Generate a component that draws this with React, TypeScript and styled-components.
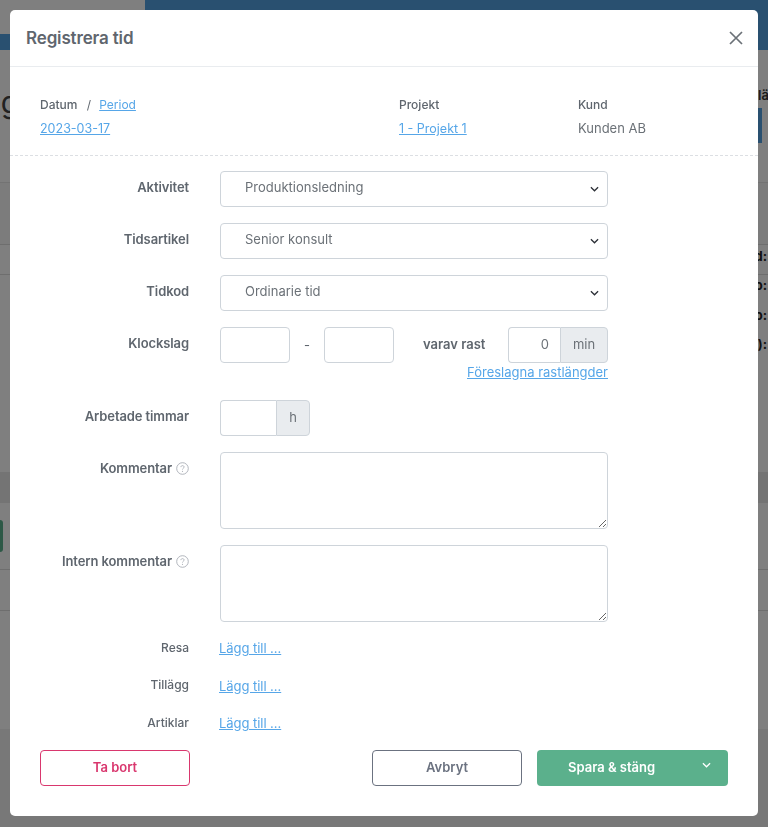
import React from "react";
import styled, { createGlobalStyle } from "styled-components";

const GlobalStyle = createGlobalStyle`
  html, body {
    margin: 0;
    padding: 0;
    height: 100%;
    overflow: hidden;
    background: #fff;
    font-family: "Inter", "Liberation Sans", sans-serif;
  }
  * {
    box-sizing: border-box;
  }
`;

const Chevron: React.FC<{ color: string }> = ({ color }) => (
  <svg width="9" height="6" viewBox="0 0 10 6" fill="none">
    <path d="M1 1l4 4 4-4" stroke={color} strokeWidth="1.4" />
  </svg>
);

const HelpIcon = () => (
  <svg width="13" height="13" viewBox="0 0 13 13" fill="none">
    <circle cx="6.5" cy="6.5" r="5.8" stroke="#a9aeb5" strokeWidth="0.9" />
    <path
      d="M4.9 5.1c0-.9.7-1.5 1.6-1.5s1.6.6 1.6 1.4c0 1.2-1.6 1.3-1.6 2.5"
      stroke="#a9aeb5"
      strokeWidth="0.9"
    />
    <circle cx="6.5" cy="9.3" r="0.6" fill="#a9aeb5" />
  </svg>
);

type FieldRowProps = {
  label: React.ReactNode;
  children: React.ReactNode;
};

const FieldRow: React.FC<FieldRowProps> = ({ label, children }) => (
  <Row>
    <Label>{label}</Label>
    <div>{children}</div>
  </Row>
);

const SelectField: React.FC<{ value: string }> = ({ value }) => (
  <SelectWrap>
    <Select defaultValue={value}>
      <option>{value}</option>
    </Select>
    <SelectArrow>
      <Chevron color="#2b2f36" />
    </SelectArrow>
  </SelectWrap>
);

const App: React.FC = () => {
  return (
    <>
      <GlobalStyle />
      <Page>
        <TopBar>
          <TopLeft>
            <TopWhite />
            <TopBlue />
          </TopLeft>
          <TopRight />
        </TopBar>
        <Heading>
          <PageTitle>ng</PageTitle>
          <HeadingSide>
            <SideLabel>läg</SideLabel>
            <SideButton />
          </HeadingSide>
        </Heading>
        <ShadedBand />
        <ThinRow />
        <SummaryBlock>
          <SummaryList>
            <span>d:</span>
            <span>o:</span>
            <span>o:</span>
            <span>):</span>
          </SummaryList>
        </SummaryBlock>
        <DarkBand />
        <GreenRow>
          <GreenButton />
        </GreenRow>
        <ThinRow $height={41} />
        <PlainFill />
        <BottomBand />
      </Page>
      <Backdrop />
      <Modal>
        <ModalHeader>
          <ModalTitle>Registrera tid</ModalTitle>
          <CloseButton aria-label="Stäng">
            <svg width="14" height="14" viewBox="0 0 14 14" fill="none">
              <path d="M1 1l12 12M13 1L1 13" stroke="#6b7177" strokeWidth="1.7" />
            </svg>
          </CloseButton>
        </ModalHeader>
        <InfoSection>
          <DateColumn>
            <InfoLabel>
              Datum <Slash>/</Slash> <SmallLink href="#">Period</SmallLink>
            </InfoLabel>
            <InfoValue>
              <LinkValue href="#">2023-03-17</LinkValue>
            </InfoValue>
          </DateColumn>
          <ProjectColumn>
            <InfoLabel>Projekt</InfoLabel>
            <InfoValue>
              <LinkValue href="#">1 - Projekt 1</LinkValue>
            </InfoValue>
          </ProjectColumn>
          <div>
            <InfoLabel>Kund</InfoLabel>
            <InfoValue>Kunden AB</InfoValue>
          </div>
        </InfoSection>
        <Form>
          <FieldRow label="Aktivitet">
            <SelectField value="Produktionsledning" />
          </FieldRow>
          <FieldRow label="Tidsartikel">
            <SelectField value="Senior konsult" />
          </FieldRow>
          <FieldRow label="Tidkod">
            <SelectField value="Ordinarie tid" />
          </FieldRow>
          <FieldRow label="Klockslag">
            <TimeLine>
              <TimeInput />
              <Dash>-</Dash>
              <TimeInput />
              <BreakLabel>varav rast</BreakLabel>
              <InputGroup>
                <GroupInput $width={52} $right defaultValue="0" />
                <Addon $width={48}>min</Addon>
              </InputGroup>
            </TimeLine>
            <BreakHint>
              <TextLink href="#">Föreslagna rastlängder</TextLink>
            </BreakHint>
          </FieldRow>
          <FieldRow label="Arbetade timmar">
            <InputGroup>
              <GroupInput $width={56} />
              <Addon $width={34}>h</Addon>
            </InputGroup>
          </FieldRow>
          <FieldRow
            label={
              <>
                Kommentar <HelpIcon />
              </>
            }
          >
            <TextArea />
          </FieldRow>
          <FieldRow
            label={
              <>
                Intern kommentar <HelpIcon />
              </>
            }
          >
            <TextArea />
          </FieldRow>
          <LinkRow>
            <LinkLabel>Resa</LinkLabel>
            <AddLink href="#">Lägg till ...</AddLink>
          </LinkRow>
          <LinkRow>
            <LinkLabel>Tillägg</LinkLabel>
            <AddLink href="#">Lägg till ...</AddLink>
          </LinkRow>
          <LinkRow>
            <LinkLabel>Artiklar</LinkLabel>
            <AddLink href="#">Lägg till ...</AddLink>
          </LinkRow>
        </Form>
        <Footer>
          <DeleteButton>Ta bort</DeleteButton>
          <FooterRight>
            <CancelButton>Avbryt</CancelButton>
            <SaveButton>
              <span>Spara &amp; stäng</span>
              <SaveArrow>
                <Chevron color="#ffffff" />
              </SaveArrow>
            </SaveButton>
          </FooterRight>
        </Footer>
      </Modal>
    </>
  );
};

const Page = styled.div`
  height: 827px;
  overflow: hidden;
  background: #fff;
  display: flex;
  flex-direction: column;
`;

const TopBar = styled.div`
  display: flex;
  height: 50px;
  flex-shrink: 0;
`;

const TopLeft = styled.div`
  width: 145px;
  display: flex;
  flex-direction: column;
`;

const TopWhite = styled.div`
  height: 34px;
  background: #fff;
`;

const TopBlue = styled.div`
  flex: 1;
  background: #52a0e0;
`;

const TopRight = styled.div`
  flex: 1;
  background: #52a0e0;
`;

const Heading = styled.div`
  height: 133px;
  flex-shrink: 0;
  display: flex;
  justify-content: space-between;
  border-bottom: 1px solid #e6e6e6;
`;

const PageTitle = styled.div`
  margin: 32px 0 0 -17px;
  font-size: 30px;
  line-height: 40px;
  color: #444;
`;

const HeadingSide = styled.div`
  width: 10px;
  padding-top: 37px;
  font-size: 13px;
  color: #333;
`;

const SideLabel = styled.div`
  height: 21px;
  line-height: 16px;
  font-weight: 600;
  white-space: nowrap;
`;

const SideButton = styled.div`
  width: 4px;
  height: 35px;
  background: #52a0e0;
`;

const ShadedBand = styled.div`
  height: 62px;
  flex-shrink: 0;
  background: #f8f8f8;
  border-bottom: 1px solid #dcdcdc;
`;

const ThinRow = styled.div<{ $height?: number }>`
  height: ${(p) => p.$height ?? 30}px;
  flex-shrink: 0;
  border-bottom: 1px solid #dcdcdc;
`;

const SummaryBlock = styled.div`
  height: 197px;
  flex-shrink: 0;
`;

const SummaryList = styled.div`
  margin-top: -28px;
  display: flex;
  flex-direction: column;
  align-items: flex-end;
  gap: 11.3px;
  padding-right: 1px;
  font-size: 13px;
  line-height: 18px;
  font-weight: 700;
  color: #222;
`;

const DarkBand = styled.div`
  height: 31px;
  flex-shrink: 0;
  background: #e8e8e8;
`;

const GreenRow = styled.div`
  height: 67px;
  flex-shrink: 0;
  padding-top: 17px;
  border-bottom: 1px solid #dcdcdc;
`;

const GreenButton = styled.div`
  width: 3px;
  height: 32px;
  border-radius: 0 4px 4px 0;
  background: #5bb08c;
`;

const PlainFill = styled.div`
  height: 118px;
  flex-shrink: 0;
`;

const BottomBand = styled.div`
  flex: 1;
  background: #f0f0f0;
`;

const Backdrop = styled.div`
  position: fixed;
  inset: 0;
  background: rgba(0, 0, 0, 0.5);
`;

const Modal = styled.div`
  position: fixed;
  left: 10px;
  top: 10px;
  width: 748px;
  height: 806px;
  background: #fff;
  border-radius: 5px;
  color: #5f666e;
  display: flex;
  flex-direction: column;
`;

const ModalHeader = styled.div`
  height: 57px;
  flex-shrink: 0;
  padding: 0 15px 0 16px;
  display: flex;
  align-items: center;
  justify-content: space-between;
  border-bottom: 1px solid #e9ecef;
`;

const ModalTitle = styled.h5`
  margin: 0;
  font-size: 17px;
  font-weight: 600;
  letter-spacing: -0.15px;
  color: #5f666e;
`;

const CloseButton = styled.button`
  border: 0;
  padding: 0;
  background: none;
  display: flex;
`;

const InfoSection = styled.div`
  height: 89px;
  flex-shrink: 0;
  padding: 28px 0 0 30px;
  display: flex;
  border-bottom: 1px dashed #dcdfe3;
`;

const DateColumn = styled.div`
  width: 359px;
`;

const ProjectColumn = styled.div`
  width: 179px;
`;

const InfoLabel = styled.div`
  height: 22px;
  line-height: 20px;
  font-size: 12px;
  font-weight: 500;
  color: #5f666e;
`;

const Slash = styled.span`
  margin: 0 5px 0 6px;
  font-weight: 400;
`;

const InfoValue = styled.div`
  line-height: 22px;
  font-size: 13px;
  color: #6b7177;
`;

const TextLink = styled.a`
  color: #56a6e8;
  text-decoration: underline;
`;

const SmallLink = styled(TextLink)`
  font-weight: 400;
`;

const LinkValue = styled(TextLink)`
  font-size: 12.5px;
`;

const Form = styled.div`
  flex: 1;
  min-height: 0;
  padding-top: 15px;
`;

const Row = styled.div`
  display: grid;
  grid-template-columns: 179px 388px;
  column-gap: 31px;
  margin-bottom: 16px;
`;

const Label = styled.label`
  display: flex;
  justify-content: flex-end;
  align-items: flex-start;
  gap: 4px;
  padding-top: 8px;
  font-size: 13px;
  line-height: 17px;
  font-weight: 600;
  letter-spacing: -0.1px;
  color: #5f666e;

  svg {
    margin-top: 2px;
  }
`;

const SelectWrap = styled.div`
  position: relative;
  height: 36px;
`;

const Select = styled.select`
  width: 100%;
  height: 36px;
  appearance: none;
  background: #fff;
  border: 1px solid #ced4da;
  border-radius: 4px;
  padding: 0 30px 5px 24px;
  font-family: inherit;
  font-size: 13px;
  color: #6b7177;
`;

const SelectArrow = styled.span`
  position: absolute;
  right: 9px;
  top: 15px;
  display: flex;
`;

const TimeLine = styled.div`
  display: flex;
  align-items: center;
`;

const TimeInput = styled.input`
  width: 70px;
  height: 36px;
  border: 1px solid #ced4da;
  border-radius: 4px;
`;

const Dash = styled.span`
  width: 34px;
  text-align: center;
  font-size: 13px;
`;

const BreakLabel = styled.span`
  margin-left: 29px;
  width: 85px;
  padding-bottom: 3px;
  font-size: 13px;
  font-weight: 600;
`;

const InputGroup = styled.div`
  display: flex;
  height: 36px;
`;

const GroupInput = styled.input<{ $width: number; $right?: boolean }>`
  width: ${(p) => p.$width}px;
  height: 36px;
  border: 1px solid #ced4da;
  border-right: 0;
  border-radius: 4px 0 0 4px;
  padding: 0 11px 2px;
  font-family: inherit;
  font-size: 13px;
  color: #6b7177;
  text-align: ${(p) => (p.$right ? "right" : "left")};
`;

const Addon = styled.div<{ $width: number }>`
  width: ${(p) => p.$width}px;
  height: 36px;
  padding-bottom: 2px;
  display: flex;
  align-items: center;
  justify-content: center;
  background: #e9ecef;
  border: 1px solid #ced4da;
  border-radius: 0 4px 4px 0;
  font-size: 13px;
  color: #6b7177;
`;

const BreakHint = styled.div`
  margin: 2px 0 5px;
  text-align: right;
  line-height: 14px;
  font-size: 13px;
`;

const TextArea = styled.textarea`
  display: block;
  width: 388px;
  height: 77px;
  border: 1px solid #ced4da;
  border-radius: 4px;
`;

const LinkRow = styled.div`
  display: grid;
  grid-template-columns: 179px auto;
  column-gap: 30px;
  height: 14px;
  margin-bottom: 23.5px;
  align-items: center;

  &:last-child {
    margin-bottom: 0;
  }
`;

const LinkLabel = styled.div`
  text-align: right;
  font-size: 12px;
  font-weight: 500;
  color: #5f666e;
`;

const AddLink = styled(TextLink)`
  font-size: 13px;
  letter-spacing: -0.05px;
  padding-top: 2px;
`;

const Footer = styled.div`
  height: 66px;
  flex-shrink: 0;
  padding: 0 30px;
  display: flex;
  justify-content: space-between;
`;

const FooterRight = styled.div`
  display: flex;
  gap: 15px;
`;

const BaseButton = styled.button`
  height: 36px;
  padding: 0 0 2px;
  border-radius: 4px;
  font-family: inherit;
  font-size: 13px;
  font-weight: 600;
  background: #fff;
`;

const DeleteButton = styled(BaseButton)`
  width: 150px;
  border: 1px solid #d9376e;
  color: #d9376e;
`;

const CancelButton = styled(BaseButton)`
  width: 150px;
  border: 1px solid #6b7280;
  color: #6b7280;
`;

const SaveButton = styled(BaseButton)`
  width: 191px;
  border: 0;
  background: #5bb08c;
  color: #fff;
  display: flex;
  align-items: center;
  padding: 0 17px 2px 31px;
  justify-content: space-between;
`;

const SaveArrow = styled.span`
  display: flex;
  margin-top: -5px;
`;

export default App;
